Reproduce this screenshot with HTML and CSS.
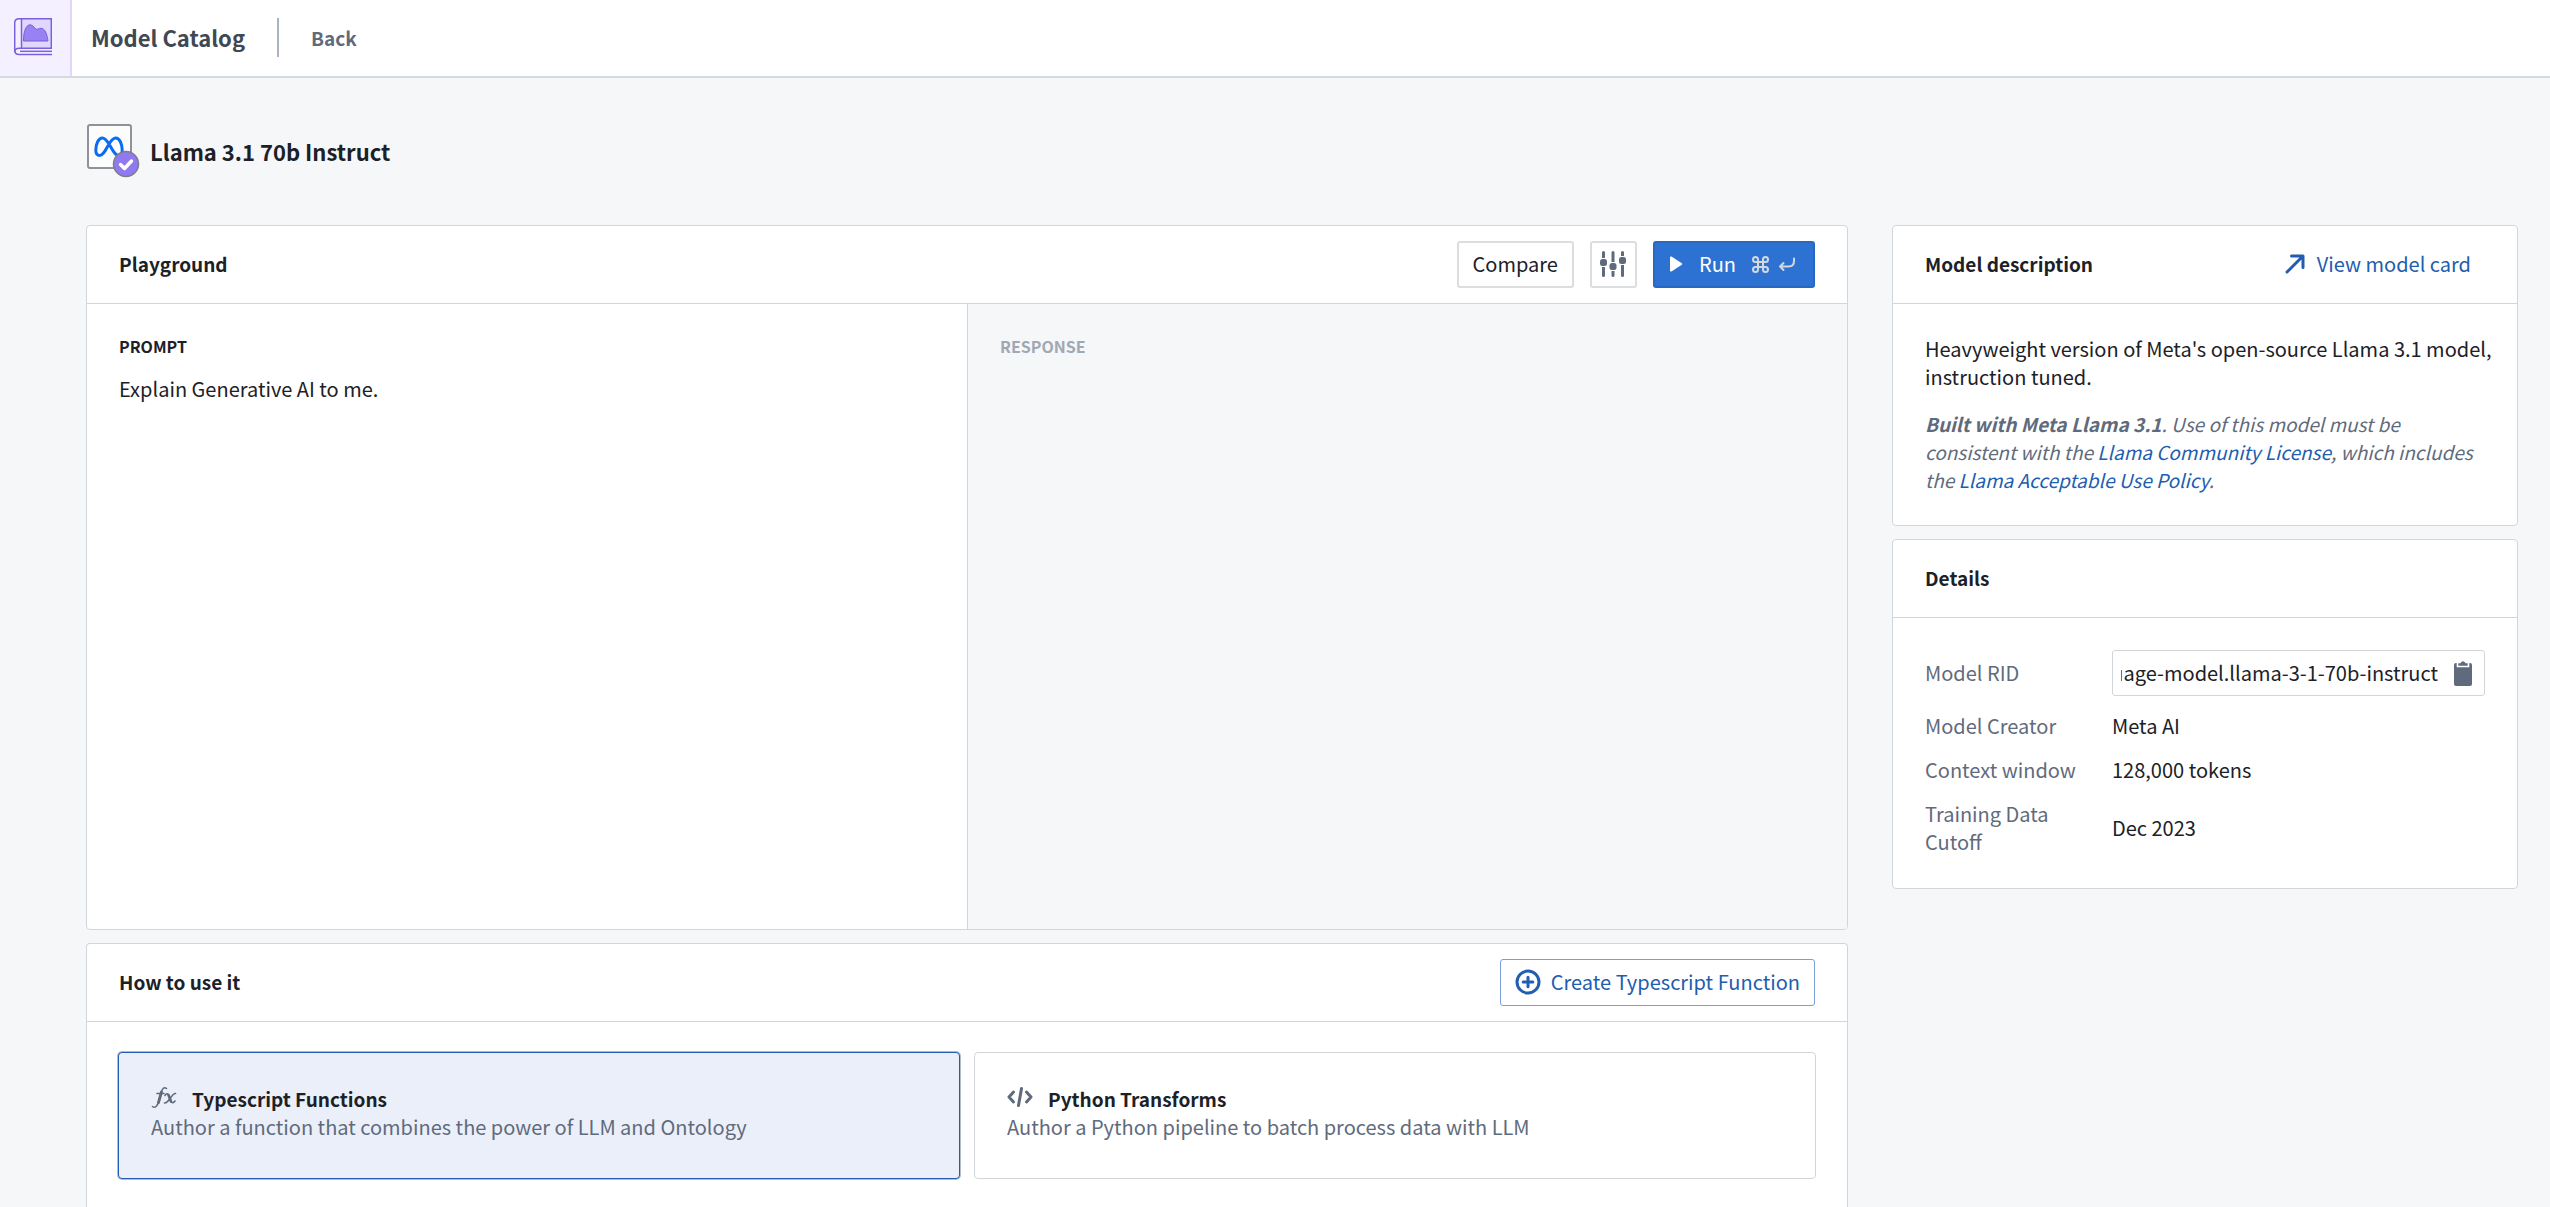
FILE: index.html
```html
<!DOCTYPE html>
<html lang="en">
<head>
<meta charset="utf-8">
<title>Model Catalog</title>
<link rel="stylesheet" href="styles.css">
</head>
<body>
<header class="topbar">
  <div class="topbar-app">
    <svg width="38" height="38" viewBox="1 1 38 38" fill="none" stroke="#7961db" stroke-width="1.5">
      <path d="M8.500 1.700H38.300V31.300H8.500Z" fill="#e1d7fd"/>
      <path d="M8.500 1.700H6Q1.700 1.700 1.700 6V33Q1.700 37.500 6 37.500H39"/>
      <path d="M8.500 31.300H6Q1.700 31.300 1.700 35"/>
      <path d="M7 34.300H39"/>
      <path d="M10.500 24C10.300 15 13 7.800 17 7.800C21 7.800 21.500 12.300 23.500 12.300C25 12.300 25.500 11.300 28 11.300C32 11.300 34 17 35 24Z" fill="#9881f3" stroke-width="1"/>
    </svg>
  </div>
  <span class="topbar-title">Model Catalog</span>
  <a class="topbar-back" href="#">Back</a>
</header>

<main class="page">
  <div class="model-head">
    <div class="model-logo">
      <svg class="model-meta" width="30" height="22" viewBox="0 0 30 22" fill="none" stroke="#0a6cf0" stroke-width="3" stroke-linecap="round">
        <path d="M15 8C12.500 4 10.800 2 8.300 2C4.500 2 1.800 8 1.800 14C1.800 17.500 3.300 19.500 5.700 19.500C9 19.500 11 15 15 8C17.500 4 19.300 2 21.800 2C25.500 2 28.200 8 28.200 14C28.200 17.500 27 19.500 24.600 19.500C21 19.500 19 14.500 15 8Z"/>
      </svg>
      <svg class="model-badge" width="28" height="28" viewBox="0 0 28 28">
        <circle cx="14" cy="14" r="12.500" fill="#9179f2" stroke="#7d7d86" stroke-width="1.500"/>
        <path d="M8.500 14.500L12.500 18.500L19.500 11" fill="none" stroke="#fff" stroke-width="3.500" stroke-linecap="round" stroke-linejoin="round"/>
      </svg>
    </div>
    <h1 class="model-name">Llama 3.1 70b Instruct</h1>
  </div>

  <div class="columns">
    <div class="column">
      <section class="card">
        <div class="card-head">
          <h2 class="card-title">Playground</h2>
          <div class="actions">
            <button class="button" type="button">Compare</button>
            <button class="button button-icon" type="button" aria-label="Settings">
              <svg width="26" height="26" viewBox="0 0 26 26" fill="#5f6b7c">
                <rect x="2" y="0" width="3" height="26" rx="1.500"/><rect x="11.500" y="0" width="3" height="26" rx="1.500"/><rect x="21" y="0" width="3" height="26" rx="1.500"/>
                <rect x="-1" y="7" width="9" height="9" fill="#fff"/><rect x="8.500" y="11" width="9" height="9" fill="#fff"/><rect x="18" y="5" width="9" height="9" fill="#fff"/>
                <rect x="0" y="8" width="7" height="7" rx="2.500"/><rect x="9.500" y="12" width="7" height="7" rx="2.500"/><rect x="19" y="6" width="7" height="7" rx="2.500"/>
              </svg>
            </button>
            <button class="button button-run" type="button">
              <svg width="14" height="16" viewBox="0 0 14 16"><path d="M1 1.500Q1 0 2.500 .6L12.800 7.200Q13.800 8 12.800 8.800L2.500 15.400Q1 16 1 14.500Z" fill="#fff"/></svg>
              <span>Run</span>
              <span class="keys">
                <svg width="17" height="17" viewBox="0 0 17 17" fill="none" stroke="#d3d8de" stroke-width="2"><path d="M6 6V3.500A2.500 2.500 0 1 0 3.500 6H13.500A2.500 2.500 0 1 0 11 3.500V13.500A2.500 2.500 0 1 0 13.500 11H3.500A2.500 2.500 0 1 0 6 13.500Z"/></svg>
                <svg width="18" height="17" viewBox="0 0 18 17" fill="none" stroke="#d3d8de" stroke-width="2" stroke-linecap="round" stroke-linejoin="round"><path d="M16 2.500V5Q16 10.500 10.500 10.500H2M5.500 7L2 10.500L5.500 14"/></svg>
              </span>
            </button>
          </div>
        </div>
        <div class="split">
          <div class="pane">
            <label class="pane-label" for="prompt">PROMPT</label>
            <textarea class="pane-text" id="prompt">Explain Generative AI to me.</textarea>
          </div>
          <div class="pane pane-response">
            <h3 class="pane-label">RESPONSE</h3>
          </div>
        </div>
      </section>

      <section class="card card-usage">
        <div class="card-head">
          <h2 class="card-title">How to use it</h2>
          <button class="button button-outline" type="button">
            <svg width="26" height="26" viewBox="0 0 26 26" fill="none" stroke="#215db0" stroke-width="3"><circle cx="13" cy="13" r="11"/><path d="M13 8.200V17.800M8.200 13H17.800" stroke-linecap="round"/></svg>
            <span>Create Typescript Function</span>
          </button>
        </div>
        <div class="options">
          <button class="option option-selected" type="button">
            <span class="option-head">
              <svg width="26" height="26" viewBox="0 0 26 26" fill="none" stroke="#5f6b7c" stroke-linecap="round">
                <path d="M15.500 3.500C13 1.500 11 4 10 8L7.500 17C6.500 21 4 23.500 1.500 21.500M6 8.500H13" stroke-width="1.600"/>
                <path d="M10.500 7L7.500 17.500" stroke-width="2.800"/>
                <path d="M14 10.500C15.500 8 17 8 18 11L20 16C21 18.500 22.500 18 24 16M24.500 8.500C21 7.500 18 18.500 13.500 18" stroke-width="1.600"/>
                <path d="M17.500 10L20 16.500" stroke-width="2.600"/>
              </svg>
              <span class="option-title">Typescript Functions</span>
            </span>
            <span class="option-text">Author a function that combines the power of LLM and Ontology</span>
          </button>
          <button class="option" type="button">
            <span class="option-head">
              <svg width="26" height="26" viewBox="0 0 26 26" fill="none" stroke="#5f6b7c" stroke-width="3" stroke-linecap="round" stroke-linejoin="round"><path d="M6.500 7L2 12L6.500 17M19.500 7L24 12L19.500 17M14.500 3.500L11.500 20.500"/></svg>
              <span class="option-title">Python Transforms</span>
            </span>
            <span class="option-text">Author a Python pipeline to batch process data with LLM</span>
          </button>
        </div>
      </section>
    </div>

    <aside class="column">
      <section class="card">
        <div class="card-head">
          <h2 class="card-title">Model description</h2>
          <a class="card-link" href="#">
            <svg width="20" height="20" viewBox="0 0 20 20" fill="none" stroke="#215db0" stroke-width="3" stroke-linecap="round" stroke-linejoin="round"><path d="M2 18L17.500 2.500M6.500 2H18V13.500"/></svg>
            <span>View model card</span>
          </a>
        </div>
        <div class="description">
          <p>Heavyweight version of Meta's open-source Llama 3.1 model, instruction tuned.</p>
          <p class="license"><strong>Built with Meta Llama 3.1</strong>. Use of this model must be consistent with the <a href="#">Llama Community License</a>, which includes the <a href="#">Llama Acceptable Use Policy</a>.</p>
        </div>
      </section>

      <section class="card">
        <div class="card-head">
          <h2 class="card-title">Details</h2>
        </div>
        <div class="details">
          <table class="details-table">
            <tr>
              <th scope="row"><label for="rid">Model RID</label></th>
              <td>
                <div class="rid">
                  <input class="rid-input" id="rid" type="text" readonly value="ri.language-model-service..language-model.llama-3-1-70b-instruct">
                  <button class="rid-copy" type="button" aria-label="Copy">
                    <svg width="18" height="26" viewBox="0 0 18 26" fill="#5f6b7c"><path d="M2 3H16Q18 3 18 5V24Q18 26 16 26H2Q0 26 0 24V5Q0 3 2 3Z"/><path d="M3.500 6.500V2.500H6Q7 .5 9 .5Q11 .5 12 2.500H14.500V6.500Z" stroke="#fff" stroke-width="1.600"/></svg>
                  </button>
                </div>
              </td>
            </tr>
            <tr><th scope="row">Model Creator</th><td>Meta AI</td></tr>
            <tr><th scope="row">Context window</th><td>128,000 tokens</td></tr>
            <tr><th scope="row">Training Data Cutoff</th><td>Dec 2023</td></tr>
          </table>
        </div>
      </section>
    </aside>
  </div>
</main>
</body>
</html>
```
FILE: styles.css
```css
*,
*::before {
  box-sizing: border-box;
}

body {
  margin: 0;
  background: #f6f7f9;
  color: #1c2127;
  font: 20px/28px "Noto Sans CJK SC", "Noto Sans", sans-serif;
}

h1, h2, h3, p {
  margin: 0;
}

a {
  color: #215db0;
  text-decoration: none;
}

svg {
  display: block;
  flex: none;
}

button, input, textarea {
  font: inherit;
  color: inherit;
}

/* Top bar */

.topbar {
  display: flex;
  align-items: center;
  height: 78px;
  padding-bottom: 2px;
  background: #fff;
  border-bottom: 2px solid #d5dae0;
}

.topbar-app {
  display: flex;
  align-items: center;
  justify-content: center;
  height: 76px;
  align-self: flex-start;
  width: 72px;
  padding: 0 4px 2px 0;
  background: #f5f0ff;
  border-right: 2px solid #e1d7fd;
}

.topbar-title {
  margin-left: 19px;
  font-size: 22px;
  font-weight: 600;
  color: #404854;
}

.topbar-back {
  margin-left: 32px;
  padding-left: 32px;
  border-left: 2px solid #abb3bf;
  font-size: 19px;
  line-height: 39px;
  font-weight: 600;
  color: #5f6b7c;
}

/* Page */

.page {
  padding: 46px 32px 0 86px;
}

.model-head {
  display: flex;
  align-items: center;
  gap: 10px;
  height: 54px;
  margin-bottom: 47px;
}

.model-logo {
  position: relative;
  width: 54px;
  height: 54px;
}

.model-logo::before {
  content: "";
  display: block;
  width: 45px;
  height: 45px;
  margin-left: 1px;
  border: 2px solid #8f9299;
  border-radius: 3px;
  background: #fcfcfc;
}

.model-meta {
  position: absolute;
  left: 8px;
  top: 12px;
}

.model-badge {
  position: absolute;
  right: 0;
  bottom: 0;
}

.model-name {
  font-size: 22px;
  font-weight: 600;
}

.columns {
  display: grid;
  grid-template-columns: minmax(0, 1fr) 626px;
  gap: 44px;
  align-items: start;
}

.column {
  display: flex;
  flex-direction: column;
  gap: 13px;
}

/* Cards */

.card {
  background: #fff;
  border: 1px solid #d3d6d9;
  border-radius: 4px;
  overflow: hidden;
}

.card-head {
  display: flex;
  align-items: center;
  justify-content: space-between;
  height: 78px;
  padding: 0 32px 1px;
  border-bottom: 1px solid #d3d6d9;
}

.card-title {
  font-size: 19px;
  font-weight: 600;
}

.card-link {
  display: flex;
  align-items: center;
  gap: 12px;
  padding-right: 14px;
}

.actions {
  display: flex;
  gap: 16px;
}

.button {
  display: flex;
  align-items: center;
  height: 47px;
  padding: 0 14px;
  background: #fff;
  border: 2px solid #dcdddf;
  border-radius: 3px;
}

.button-icon {
  width: 47px;
  padding: 0;
  justify-content: center;
}

.button-run {
  gap: 16px;
  padding: 0 17px 0 14px;
  background: #2d72d2;
  border-color: #2868c0;
  color: #fff;
}

.keys {
  display: flex;
  gap: 9px;
}

.button-outline {
  gap: 10px;
  border: 1px solid #7a9fd8;
  color: #215db0;
}

/* Playground */

.split {
  display: grid;
  grid-template-columns: 1fr 1fr;
  height: 625px;
}

.pane {
  display: flex;
  flex-direction: column;
  gap: 15px;
  padding: 28px 32px;
}

.pane-response {
  background: #f6f7f9;
  border-left: 1px solid #d3d6d9;
  color: #a0a8b4;
}

.pane-label {
  font-size: 16px;
  font-weight: 600;
}

.pane-text {
  flex: 1;
  padding: 0;
  border: 0;
  outline: 0;
  resize: none;
  background: none;
}

/* Usage options */

.card-usage {
  border-bottom: 0;
  border-radius: 4px 4px 0 0;
}

.options {
  display: grid;
  grid-template-columns: 1fr 1fr;
  gap: 14px;
  padding: 30px 31px;
}

.option {
  display: flex;
  flex-direction: column;
  align-items: flex-start;
  justify-content: center;
  height: 127px;
  padding: 0 32px 6px;
  border: 1px solid #d3d6d9;
  border-radius: 4px;
  background: #fff;
  text-align: left;
}

.option-selected {
  border-color: #215db0;
  background: #ebeffa;
  box-shadow: 0 0 0 1px #b4bccb;
}

.option-head {
  display: flex;
  align-items: flex-start;
  gap: 15px;
}

.option-title {
  font-size: 19px;
  font-weight: 600;
}

.option-text {
  color: #5f6b7c;
}

/* Description and details */

.description {
  display: flex;
  flex-direction: column;
  gap: 19px;
  padding: 31px 24px 31px 32px;
}

.license {
  padding-right: 8px;
  font-size: 19px;
  font-style: italic;
  color: #5f6b7c;
}

.details {
  padding: 24px 32px;
}

.details-table {
  width: 100%;
  border-collapse: collapse;
  table-layout: fixed;
}

.details-table th {
  width: 187px;
  padding: 8px 32px 8px 0;
  font-weight: 400;
  text-align: left;
  color: #5f6b7c;
}

.details-table td {
  padding: 8px 0;
}

.rid {
  display: flex;
  align-items: center;
  height: 46px;
  padding: 0 12px 0 8px;
  border: 1px solid #d3d6d9;
  border-radius: 3px;
}

.rid-input {
  flex: 1;
  min-width: 0;
  padding: 0;
  border: 0;
  outline: 0;
  background: none;
  direction: rtl;
}

.rid-copy {
  padding: 0;
  margin-left: 16px;
  border: 0;
  background: none;
}
```
